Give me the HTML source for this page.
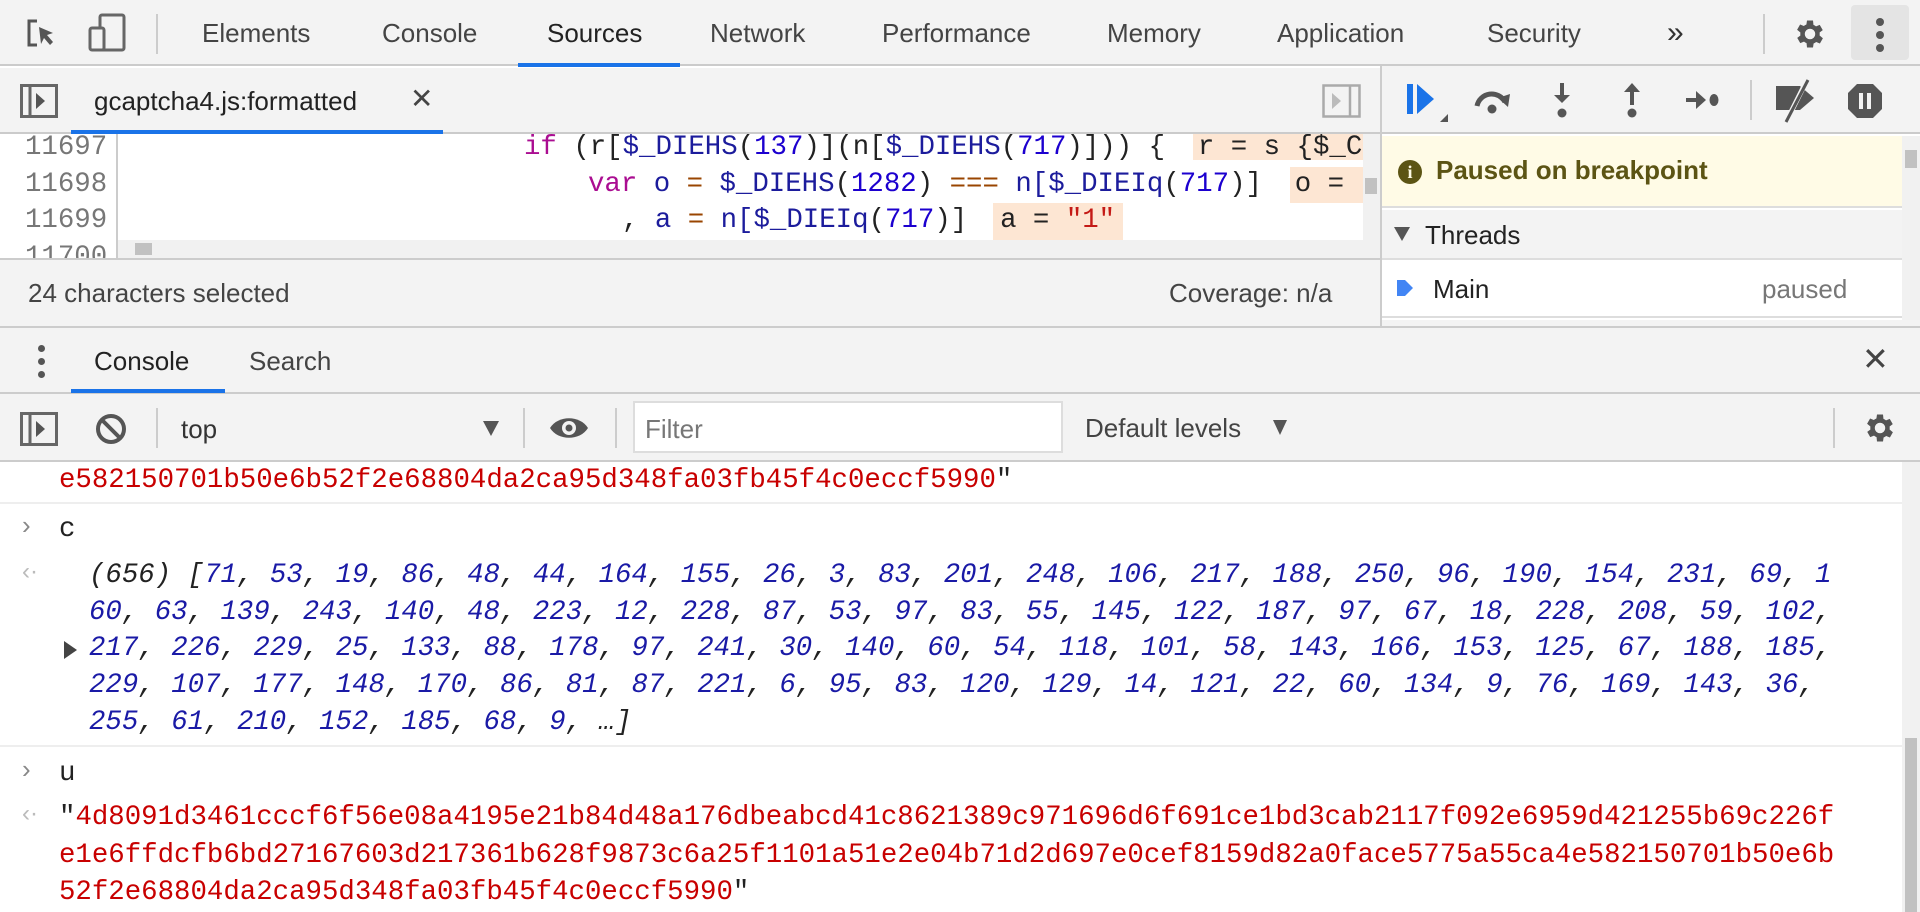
<!DOCTYPE html>
<html><head><meta charset="utf-8">
<style>
*{margin:0;padding:0;box-sizing:border-box}
body{width:1920px;height:912px;overflow:hidden;background:#fff;font-family:"Liberation Sans",sans-serif;position:relative}
.a{position:absolute;white-space:pre}
.ui{font-size:26px;color:#333}
.mono{font-family:"Liberation Mono",monospace;font-size:27.4px}
.bar{background:#f3f3f3}
.hl{background:#fde6d3}
.kw{color:#aa0d91}.id{color:#1c1c9c}.num{color:#1c00cf}.op{color:#994500}.str{color:#c41a16}.dk{color:#222}
.sep{position:absolute;width:2px;background:#ccc}
</style></head><body>
<!-- top toolbar -->
<div class="a bar" style="left:0;top:0;width:1920px;height:66px;border-bottom:2px solid #cbcbcb"></div>
<svg class="a" style="left:25px;top:17px" width="34" height="34" viewBox="0 0 34 34"><path d="M12 4H4v24h8" fill="none" stroke="#555" stroke-width="3"/><path d="M14 10l14 6-6 2 6 7-3 3-6-7-3 6z" fill="#555"/></svg>
<svg class="a" style="left:88px;top:12px" width="42" height="42" viewBox="0 0 42 42"><rect x="12" y="3" width="24" height="35" rx="2" fill="none" stroke="#666" stroke-width="3"/><rect x="2" y="16" width="14" height="22" rx="2" fill="#f3f3f3" stroke="#666" stroke-width="3"/></svg>
<div class="sep" style="left:156px;top:14px;height:40px"></div>
<div class="a ui" style="left:202px;top:18px;color:#444">Elements</div>
<div class="a ui" style="left:382px;top:18px;color:#444">Console</div>
<div class="a ui" style="left:547px;top:18px;color:#222">Sources</div>
<div class="a" style="left:518px;top:63px;width:162px;height:4px;background:#1a73e8"></div>
<div class="a ui" style="left:710px;top:18px;color:#444">Network</div>
<div class="a ui" style="left:882px;top:18px;color:#444">Performance</div>
<div class="a ui" style="left:1107px;top:18px;color:#444">Memory</div>
<div class="a ui" style="left:1277px;top:18px;color:#444">Application</div>
<div class="a ui" style="left:1487px;top:18px;color:#444">Security</div>
<div class="a ui" style="left:1667px;top:16px;color:#333;font-size:30px">»</div>
<div class="sep" style="left:1763px;top:14px;height:40px"></div>
<svg class="a" style="left:1792px;top:16px" width="36" height="36" viewBox="0 0 24 24"><path fill="#555" d="M19.4 13a7.5 7.5 0 000-2l2.1-1.6-2-3.5-2.5 1a7 7 0 00-1.7-1L15 3h-4l-.4 2.7a7 7 0 00-1.7 1l-2.5-1-2 3.5L6.6 11a7.5 7.5 0 000 2l-2.1 1.6 2 3.5 2.5-1a7 7 0 001.7 1L11 21h4l.4-2.7a7 7 0 001.7-1l2.5 1 2-3.5zM13 15.5a3.5 3.5 0 110-7 3.5 3.5 0 010 7z" transform="translate(-1 0)"/></svg>
<div class="a" style="left:1851px;top:5px;width:58px;height:55px;background:#e4e4e4;border-radius:4px"></div>
<div class="a" style="left:1876px;top:18px;width:8px;height:8px;border-radius:4px;background:#555"></div>
<div class="a" style="left:1876px;top:31px;width:8px;height:8px;border-radius:4px;background:#555"></div>
<div class="a" style="left:1876px;top:44px;width:8px;height:8px;border-radius:4px;background:#555"></div>

<!-- sources tab bar -->
<div class="a bar" style="left:0;top:68px;width:1380px;height:66px;border-bottom:2px solid #cbcbcb"></div>
<svg class="a" style="left:20px;top:84px" width="38" height="34"><rect x="1.5" y="1.5" width="35" height="31" fill="none" stroke="#666" stroke-width="3"/><line x1="10" y1="2" x2="10" y2="32" stroke="#666" stroke-width="3"/><path d="M16 9l9 8-9 8z" fill="#555"/></svg>
<div class="a ui" style="left:94px;top:86px;color:#222">gcaptcha4.js:formatted</div>
<div class="a ui" style="left:410px;top:82px;color:#444;font-size:28px">✕</div>
<div class="a" style="left:71px;top:130px;width:372px;height:4px;background:#1a73e8"></div>
<svg class="a" style="left:1322px;top:84px" width="40" height="34"><rect x="1.5" y="1.5" width="36" height="31" fill="none" stroke="#aaa" stroke-width="2.5"/><line x1="28" y1="2" x2="28" y2="32" stroke="#aaa" stroke-width="2.5"/><path d="M10 9l9 8-9 8z" fill="#bbb"/></svg>
<div class="a" style="left:1380px;top:66px;width:2px;height:260px;background:#ccc"></div>

<!-- code -->
<div class="a" style="left:0;top:134px;width:1380px;height:124px;background:#fff;overflow:hidden">
  <div class="a" style="left:116px;top:0;width:2px;height:124px;background:#ccc"></div>
  <div class="a mono" style="left:25px;top:-4px;color:#777;line-height:36.7px">11697
11698
11699
11700</div>
  <div class="a hl" style="left:1193px;top:0;width:170px;height:26px"></div>
  <div class="a hl" style="left:1290px;top:33px;width:73px;height:36px"></div>
  <div class="a hl" style="left:993px;top:69px;width:130px;height:37px"></div>
  <div class="a mono" style="left:524px;top:-4px;line-height:36.7px"><span class="kw">if</span> <span class="dk">(r[</span><span class="id">$_DIEHS</span><span class="dk">(</span><span class="num">137</span><span class="dk">)](n[</span><span class="id">$_DIEHS</span><span class="dk">(</span><span class="num">717</span><span class="dk">)])) {  r = s {$_C</span></div>
  <div class="a mono" style="left:588px;top:32.7px;line-height:36.7px"><span class="kw">var</span> <span class="id">o</span> <span class="op">=</span> <span class="id">$_DIEHS</span><span class="dk">(</span><span class="num">1282</span><span class="dk">)</span> <span class="op">===</span> <span class="id">n[$_DIEIq</span><span class="dk">(</span><span class="num">717</span><span class="dk">)]  o =</span></div>
  <div class="a mono" style="left:622px;top:69.4px;line-height:36.7px"><span class="dk">,</span> <span class="id">a</span> <span class="op">=</span> <span class="id">n[$_DIEIq</span><span class="dk">(</span><span class="num">717</span><span class="dk">)]</span>  <span class="dk">a = </span><span class="str">"1"</span></div>
  <div class="a" style="left:118px;top:106px;width:1245px;height:18px;background:#f1f1f1"></div>
  <div class="a" style="left:135px;top:109px;width:17px;height:12px;background:#c1c1c1"></div>
  <div class="a" style="left:1363px;top:0;width:17px;height:124px;background:#f1f1f1"></div>
  <div class="a" style="left:1365px;top:44px;width:12px;height:16px;background:#c1c1c1"></div>
</div>
<!-- status bar -->
<div class="a bar" style="left:0;top:258px;width:1380px;height:68px;border-top:2px solid #ccc"></div>
<div class="a ui" style="left:28px;top:278px;color:#444">24 characters selected</div>
<div class="a ui" style="left:1169px;top:278px;color:#444">Coverage: n/a</div>

<!-- right sidebar -->
<div class="a bar" style="left:1382px;top:66px;width:538px;height:68px;border-bottom:2px solid #cbcbcb"></div>
<svg class="a" style="left:1404px;top:80px" width="50" height="50"><rect x="3" y="4" width="6" height="30" fill="#1a73e8"/><path d="M13 4l17 15-17 15z" fill="#1a73e8"/><path d="M36 42l8-8v8z" fill="#555"/></svg>
<svg class="a" style="left:1472px;top:82px" width="42" height="36"><path d="M5 24a15 15 0 0128-4" fill="none" stroke="#555" stroke-width="5"/><path d="M26 16l12-4-2 13z" fill="#555"/><circle cx="20" cy="27" r="4.5" fill="#555"/></svg>
<svg class="a" style="left:1550px;top:80px" width="24" height="40"><rect x="10" y="3" width="4" height="14" fill="#555"/><path d="M4 15h16l-8 8z" fill="#555"/><circle cx="12" cy="33" r="4.5" fill="#555"/></svg>
<svg class="a" style="left:1620px;top:80px" width="24" height="40"><path d="M4 12h16l-8-9z" fill="#555"/><rect x="10" y="11" width="4" height="14" fill="#555"/><circle cx="12" cy="33" r="4.5" fill="#555"/></svg>
<svg class="a" style="left:1684px;top:86px" width="40" height="28"><rect x="2" y="12" width="12" height="4" fill="#555"/><path d="M12 5l10 9-10 9z" fill="#555"/><ellipse cx="30" cy="14" rx="4.5" ry="6" fill="#555"/></svg>
<div class="sep" style="left:1750px;top:80px;height:40px"></div>
<svg class="a" style="left:1772px;top:78px" width="48" height="46"><path d="M4 14h24l14 12-14 12H4z" fill="#555" transform="translate(0 -6)"/><line x1="34" y1="4" x2="14" y2="44" stroke="#f3f3f3" stroke-width="5"/><line x1="36" y1="2" x2="14" y2="44" stroke="#555" stroke-width="3"/></svg>
<svg class="a" style="left:1846px;top:82px" width="38" height="38"><path d="M11 2h16l9 9v16l-9 9H11l-9-9V11z" fill="#555"/><rect x="13" y="11" width="4" height="16" fill="#f3f3f3"/><rect x="21" y="11" width="4" height="16" fill="#f3f3f3"/></svg>
<div class="a" style="left:1382px;top:136px;width:520px;height:72px;background:#fffbe6;border-bottom:2px solid #ddd"></div>
<div class="a" style="left:1398px;top:160px;width:24px;height:24px;border-radius:12px;background:#5c5414;color:#fffbe6;font:bold 18px 'Liberation Serif',serif;text-align:center;line-height:24px">i</div>
<div class="a ui" style="left:1436px;top:155px;color:#5c5414;font-weight:bold">Paused on breakpoint</div>
<div class="a bar" style="left:1382px;top:210px;width:520px;height:50px;border-bottom:2px solid #ddd"></div>
<div class="a" style="left:1394px;top:227px;width:0;height:0;border-left:8px solid transparent;border-right:8px solid transparent;border-top:14px solid #555"></div>
<div class="a ui" style="left:1425px;top:220px;color:#222">Threads</div>
<div class="a" style="left:1382px;top:262px;width:520px;height:56px;background:#fff;border-bottom:2px solid #ddd"></div>
<svg class="a" style="left:1395px;top:276px" width="20" height="24"><path d="M2 4h8l8 8-8 8H2z" fill="#4285f4"/></svg>
<div class="a ui" style="left:1433px;top:274px;color:#222">Main</div>
<div class="a ui" style="left:1762px;top:274px;color:#777">paused</div>
<div class="a" style="left:1902px;top:136px;width:18px;height:190px;background:#f1f1f1"></div>
<div class="a" style="left:1905px;top:150px;width:12px;height:18px;background:#c1c1c1"></div>
<div class="a bar" style="left:1382px;top:320px;width:538px;height:8px"></div>

<!-- drawer header -->
<div class="a bar" style="left:0;top:326px;width:1920px;height:68px;border-top:2px solid #ccc;border-bottom:2px solid #ccc"></div>
<div class="a" style="left:38px;top:345px;width:7px;height:7px;border-radius:4px;background:#555"></div>
<div class="a" style="left:38px;top:358px;width:7px;height:7px;border-radius:4px;background:#555"></div>
<div class="a" style="left:38px;top:371px;width:7px;height:7px;border-radius:4px;background:#555"></div>
<div class="a ui" style="left:94px;top:346px;color:#222">Console</div>
<div class="a ui" style="left:249px;top:346px;color:#444">Search</div>
<div class="a" style="left:71px;top:389px;width:154px;height:4px;background:#1a73e8"></div>
<div class="a ui" style="left:1862px;top:340px;color:#444;font-size:32px">✕</div>

<!-- console toolbar -->
<div class="a bar" style="left:0;top:394px;width:1920px;height:68px;border-bottom:2px solid #ccc"></div>
<svg class="a" style="left:20px;top:412px" width="38" height="34"><rect x="1.5" y="1.5" width="35" height="31" fill="none" stroke="#666" stroke-width="3"/><line x1="10" y1="2" x2="10" y2="32" stroke="#666" stroke-width="3"/><path d="M16 9l9 8-9 8z" fill="#555"/></svg>
<svg class="a" style="left:94px;top:412px" width="34" height="34"><circle cx="17" cy="17" r="13" fill="none" stroke="#555" stroke-width="4"/><line x1="8" y1="8" x2="26" y2="26" stroke="#555" stroke-width="4"/></svg>
<div class="sep" style="left:156px;top:408px;height:40px"></div>
<div class="a ui" style="left:181px;top:414px;color:#333">top</div>
<div class="a" style="left:483px;top:421px;width:0;height:0;border-left:8px solid transparent;border-right:8px solid transparent;border-top:15px solid #555"></div>
<div class="sep" style="left:523px;top:408px;height:40px"></div>
<svg class="a" style="left:548px;top:413px" width="42" height="30"><path d="M2 15C10 2 32 2 40 15 32 28 10 28 2 15z" fill="#555"/><circle cx="21" cy="15" r="7" fill="#f3f3f3"/><circle cx="21" cy="15" r="3.5" fill="#555"/></svg>
<div class="sep" style="left:615px;top:408px;height:40px"></div>
<div class="a" style="left:633px;top:401px;width:430px;height:52px;background:#fff;border:2px solid #ddd"></div>
<div class="a ui" style="left:645px;top:414px;color:#777">Filter</div>
<div class="a ui" style="left:1085px;top:413px;color:#444">Default levels</div>
<div class="a" style="left:1273px;top:420px;width:0;height:0;border-left:7px solid transparent;border-right:7px solid transparent;border-top:15px solid #555"></div>
<div class="sep" style="left:1833px;top:408px;height:40px"></div>
<svg class="a" style="left:1862px;top:410px" width="36" height="36" viewBox="0 0 24 24"><path fill="#555" d="M19.4 13a7.5 7.5 0 000-2l2.1-1.6-2-3.5-2.5 1a7 7 0 00-1.7-1L15 3h-4l-.4 2.7a7 7 0 00-1.7 1l-2.5-1-2 3.5L6.6 11a7.5 7.5 0 000 2l-2.1 1.6 2 3.5 2.5-1a7 7 0 001.7 1L11 21h4l.4-2.7a7 7 0 001.7-1l2.5 1 2-3.5zM13 15.5a3.5 3.5 0 110-7 3.5 3.5 0 010 7z" transform="translate(-1 0)"/></svg>

<!-- console content -->
<div class="a" style="left:1902px;top:462px;width:18px;height:450px;background:#f1f1f1"></div>
<div class="a" style="left:1905px;top:738px;width:12px;height:174px;background:#c1c1c1"></div>
<div class="a mono" style="left:59px;top:463px;line-height:36.7px;color:#c80000">e582150701b50e6b52f2e68804da2ca95d348fa03fb45f4c0eccf5990<span style="color:#222">"</span></div>
<div class="a" style="left:0;top:502px;width:1902px;height:2px;background:#eee"></div>
<div class="a" style="left:22px;top:510px;font-size:26px;color:#888">›</div>
<div class="a mono" style="left:59px;top:512px;line-height:36.7px;color:#222">c</div>
<div class="a" style="left:22px;top:558px;font-size:24px;color:#bbb">‹·</div>
<div class="a mono" style="left:89px;top:558px;line-height:36.7px;font-style:italic;color:#1a1aa6"><span style="color:#222">(656) [</span>71<span style="color:#222">, </span>53<span style="color:#222">, </span>19<span style="color:#222">, </span>86<span style="color:#222">, </span>48<span style="color:#222">, </span>44<span style="color:#222">, </span>164<span style="color:#222">, </span>155<span style="color:#222">, </span>26<span style="color:#222">, </span>3<span style="color:#222">, </span>83<span style="color:#222">, </span>201<span style="color:#222">, </span>248<span style="color:#222">, </span>106<span style="color:#222">, </span>217<span style="color:#222">, </span>188<span style="color:#222">, </span>250<span style="color:#222">, </span>96<span style="color:#222">, </span>190<span style="color:#222">, </span>154<span style="color:#222">, </span>231<span style="color:#222">, </span>69<span style="color:#222">, </span>1
60<span style="color:#222">, </span>63<span style="color:#222">, </span>139<span style="color:#222">, </span>243<span style="color:#222">, </span>140<span style="color:#222">, </span>48<span style="color:#222">, </span>223<span style="color:#222">, </span>12<span style="color:#222">, </span>228<span style="color:#222">, </span>87<span style="color:#222">, </span>53<span style="color:#222">, </span>97<span style="color:#222">, </span>83<span style="color:#222">, </span>55<span style="color:#222">, </span>145<span style="color:#222">, </span>122<span style="color:#222">, </span>187<span style="color:#222">, </span>97<span style="color:#222">, </span>67<span style="color:#222">, </span>18<span style="color:#222">, </span>228<span style="color:#222">, </span>208<span style="color:#222">, </span>59<span style="color:#222">, </span>102<span style="color:#222">,</span>
217<span style="color:#222">, </span>226<span style="color:#222">, </span>229<span style="color:#222">, </span>25<span style="color:#222">, </span>133<span style="color:#222">, </span>88<span style="color:#222">, </span>178<span style="color:#222">, </span>97<span style="color:#222">, </span>241<span style="color:#222">, </span>30<span style="color:#222">, </span>140<span style="color:#222">, </span>60<span style="color:#222">, </span>54<span style="color:#222">, </span>118<span style="color:#222">, </span>101<span style="color:#222">, </span>58<span style="color:#222">, </span>143<span style="color:#222">, </span>166<span style="color:#222">, </span>153<span style="color:#222">, </span>125<span style="color:#222">, </span>67<span style="color:#222">, </span>188<span style="color:#222">, </span>185<span style="color:#222">,</span>
229<span style="color:#222">, </span>107<span style="color:#222">, </span>177<span style="color:#222">, </span>148<span style="color:#222">, </span>170<span style="color:#222">, </span>86<span style="color:#222">, </span>81<span style="color:#222">, </span>87<span style="color:#222">, </span>221<span style="color:#222">, </span>6<span style="color:#222">, </span>95<span style="color:#222">, </span>83<span style="color:#222">, </span>120<span style="color:#222">, </span>129<span style="color:#222">, </span>14<span style="color:#222">, </span>121<span style="color:#222">, </span>22<span style="color:#222">, </span>60<span style="color:#222">, </span>134<span style="color:#222">, </span>9<span style="color:#222">, </span>76<span style="color:#222">, </span>169<span style="color:#222">, </span>143<span style="color:#222">, </span>36<span style="color:#222">,</span>
255<span style="color:#222">, </span>61<span style="color:#222">, </span>210<span style="color:#222">, </span>152<span style="color:#222">, </span>185<span style="color:#222">, </span>68<span style="color:#222">, </span>9<span style="color:#222">, …]</span></div>
<div class="a" style="left:64px;top:641px;width:0;height:0;border-top:9px solid transparent;border-bottom:9px solid transparent;border-left:13px solid #444"></div>
<div class="a" style="left:0;top:745px;width:1902px;height:2px;background:#eee"></div>
<div class="a" style="left:22px;top:754px;font-size:26px;color:#888">›</div>
<div class="a mono" style="left:59px;top:756px;line-height:36.7px;color:#222">u</div>
<div class="a" style="left:22px;top:800px;font-size:24px;color:#bbb">‹·</div>
<div class="a mono" style="left:59px;top:799px;line-height:37.5px;color:#c80000"><span style="color:#222">"</span>4d8091d3461cccf6f56e08a4195e21b84d48a176dbeabcd41c8621389c971696d6f691ce1bd3cab2117f092e6959d421255b69c226f
e1e6ffdcfb6bd27167603d217361b628f9873c6a25f1101a51e2e04b71d2d697e0cef8159d82a0face5775a55ca4e582150701b50e6b
52f2e68804da2ca95d348fa03fb45f4c0eccf5990<span style="color:#222">"</span></div>
</body></html>
